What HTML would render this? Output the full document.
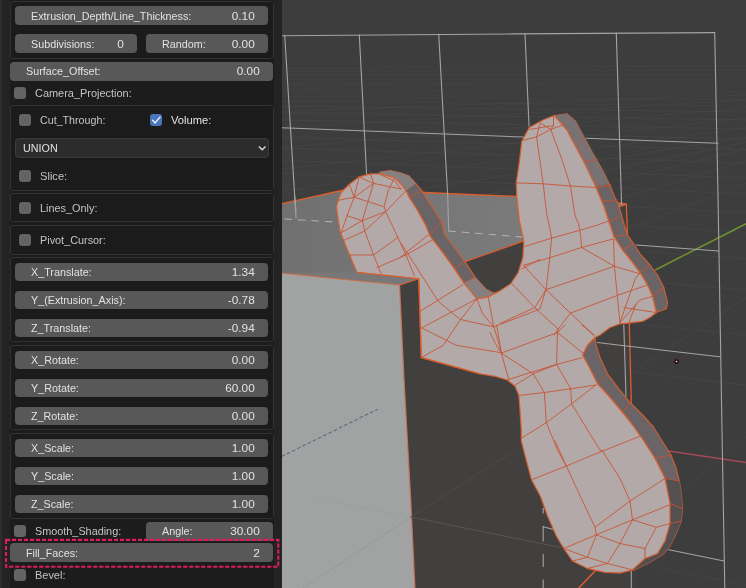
<!DOCTYPE html>
<html><head><meta charset="utf-8"><title>Blender</title>
<style>
html,body{margin:0;padding:0;background:#3d3d3d;}
body{width:746px;height:588px;overflow:hidden;position:relative;font-family:"Liberation Sans",sans-serif;font-size:11.6px;color:#e2e2e2;}
#panel{position:absolute;left:0;top:0;width:282px;height:588px;background:#232323;overflow:hidden;will-change:transform;transform:translateZ(0);}
#lstrip{position:absolute;left:0;top:0;width:2px;height:588px;background:#2d2d2d;}
#col{position:absolute;left:10px;top:0;width:264px;height:588px;background:#1c1c1c;}
.box{position:absolute;left:10px;width:264px;box-sizing:border-box;background:#1b1b1b;border:1px solid #313131;border-radius:3px;}
.f{position:absolute;height:18.8px;background:#585858;border-radius:4px;}
.t{position:absolute;white-space:nowrap;line-height:19px;height:19px;transform-origin:0 50%;transform:scaleX(0.928);}
.v{position:absolute;white-space:nowrap;line-height:19px;height:19px;text-align:right;font-size:11.8px;}
.cb{position:absolute;width:12.2px;height:12.2px;border-radius:3px;background:#636363;}
.dim{color:#c4c4c4;transform:scaleX(0.944);}
#vp{position:absolute;left:282px;top:0;}
</style></head>
<body>
<div id="vp"><svg width="464" height="588" viewBox="282 0 464 588" style="display:block">
<defs><linearGradient id="bg" x1="0" y1="0" x2="0" y2="1"><stop offset="0" stop-color="#3d3d3d"/><stop offset="1" stop-color="#3b3b3b"/></linearGradient><linearGradient id="tf" gradientUnits="userSpaceOnUse" x1="282" y1="200" x2="620" y2="260"><stop offset="0" stop-color="#707070"/><stop offset="0.5" stop-color="#787878"/><stop offset="1" stop-color="#7e7e7e"/></linearGradient></defs>
<rect x="282" y="0" width="464" height="588" fill="#3d3d3d"/>
<polyline points="282.0,211.2 746.0,137.0" fill="none" stroke="#515151" stroke-width="0.9" stroke-linejoin="round" stroke-linecap="round" opacity="0.42"/>
<polyline points="282.0,235.3 746.0,142.5" fill="none" stroke="#515151" stroke-width="0.9" stroke-linejoin="round" stroke-linecap="round" opacity="0.42"/>
<polyline points="282.0,260.4 746.0,149.0" fill="none" stroke="#515151" stroke-width="0.9" stroke-linejoin="round" stroke-linecap="round" opacity="0.42"/>
<polyline points="282.0,300.2 746.0,161.0" fill="none" stroke="#515151" stroke-width="0.9" stroke-linejoin="round" stroke-linecap="round" opacity="0.42"/>
<polyline points="282.0,364.3 746.0,183.3" fill="none" stroke="#515151" stroke-width="0.9" stroke-linejoin="round" stroke-linecap="round" opacity="0.42"/>
<polyline points="282.0,599.2 746.0,297.6" fill="none" stroke="#515151" stroke-width="0.9" stroke-linejoin="round" stroke-linecap="round" opacity="0.42"/>
<polyline points="282.0,831.1 746.0,436.7" fill="none" stroke="#515151" stroke-width="0.9" stroke-linejoin="round" stroke-linecap="round" opacity="0.42"/>
<polyline points="282.0,1233.6 746.0,700.0" fill="none" stroke="#515151" stroke-width="0.9" stroke-linejoin="round" stroke-linecap="round" opacity="0.42"/>
<polyline points="282.0,106.1 746.0,112.0" fill="none" stroke="#515151" stroke-width="0.9" stroke-linejoin="round" stroke-linecap="round" opacity="0.42"/>
<polyline points="282.0,112.6 746.0,120.0" fill="none" stroke="#515151" stroke-width="0.9" stroke-linejoin="round" stroke-linecap="round" opacity="0.42"/>
<polyline points="282.0,120.0 746.0,129.0" fill="none" stroke="#515151" stroke-width="0.9" stroke-linejoin="round" stroke-linecap="round" opacity="0.42"/>
<polyline points="282.0,128.2 746.0,139.0" fill="none" stroke="#515151" stroke-width="0.9" stroke-linejoin="round" stroke-linecap="round" opacity="0.42"/>
<polyline points="282.0,137.2 746.0,150.0" fill="none" stroke="#515151" stroke-width="0.9" stroke-linejoin="round" stroke-linecap="round" opacity="0.42"/>
<polyline points="282.0,147.9 746.0,163.0" fill="none" stroke="#515151" stroke-width="0.9" stroke-linejoin="round" stroke-linecap="round" opacity="0.42"/>
<polyline points="282.0,160.2 746.0,178.0" fill="none" stroke="#515151" stroke-width="0.9" stroke-linejoin="round" stroke-linecap="round" opacity="0.42"/>
<polyline points="282.0,173.3 746.0,194.0" fill="none" stroke="#515151" stroke-width="0.9" stroke-linejoin="round" stroke-linecap="round" opacity="0.42"/>
<polyline points="282.0,188.7 746.0,212.8" fill="none" stroke="#515151" stroke-width="0.9" stroke-linejoin="round" stroke-linecap="round" opacity="0.42"/>
<polyline points="282.0,204.7 746.0,232.3" fill="none" stroke="#515151" stroke-width="0.9" stroke-linejoin="round" stroke-linecap="round" opacity="0.42"/>
<polyline points="282.0,226.3 746.0,258.7" fill="none" stroke="#515151" stroke-width="0.9" stroke-linejoin="round" stroke-linecap="round" opacity="0.42"/>
<polyline points="282.0,252.0 746.0,290.0" fill="none" stroke="#515151" stroke-width="0.9" stroke-linejoin="round" stroke-linecap="round" opacity="0.42"/>
<polyline points="282.0,288.9 746.0,335.0" fill="none" stroke="#515151" stroke-width="0.9" stroke-linejoin="round" stroke-linecap="round" opacity="0.42"/>
<polyline points="282.0,330.1 746.0,385.3" fill="none" stroke="#515151" stroke-width="0.9" stroke-linejoin="round" stroke-linecap="round" opacity="0.42"/>
<polyline points="282.0,493.9 746.0,585.0" fill="none" stroke="#515151" stroke-width="0.9" stroke-linejoin="round" stroke-linecap="round" opacity="0.42"/>
<polyline points="282.0,68.3 746.0,66.0" fill="none" stroke="#4c4c4c" stroke-width="0.9" stroke-linejoin="round" stroke-linecap="round" opacity="0.35"/>
<polyline points="282.0,71.6 746.0,70.0" fill="none" stroke="#4c4c4c" stroke-width="0.9" stroke-linejoin="round" stroke-linecap="round" opacity="0.35"/>
<polyline points="282.0,74.9 746.0,74.0" fill="none" stroke="#4c4c4c" stroke-width="0.9" stroke-linejoin="round" stroke-linecap="round" opacity="0.35"/>
<polyline points="282.0,79.0 746.0,79.0" fill="none" stroke="#4c4c4c" stroke-width="0.9" stroke-linejoin="round" stroke-linecap="round" opacity="0.35"/>
<polyline points="282.0,83.9 746.0,85.0" fill="none" stroke="#4c4c4c" stroke-width="0.9" stroke-linejoin="round" stroke-linecap="round" opacity="0.35"/>
<polyline points="282.0,89.7 746.0,92.0" fill="none" stroke="#4c4c4c" stroke-width="0.9" stroke-linejoin="round" stroke-linecap="round" opacity="0.35"/>
<polyline points="282.0,96.2 746.0,100.0" fill="none" stroke="#4c4c4c" stroke-width="0.9" stroke-linejoin="round" stroke-linecap="round" opacity="0.35"/>
<polyline points="282.0,101.1 746.0,106.0" fill="none" stroke="#4c4c4c" stroke-width="0.9" stroke-linejoin="round" stroke-linecap="round" opacity="0.35"/>
<polyline points="282.0,111.2 746.0,95.0" fill="none" stroke="#4c4c4c" stroke-width="0.9" stroke-linejoin="round" stroke-linecap="round" opacity="0.35"/>
<polyline points="282.0,127.8 746.0,100.0" fill="none" stroke="#4c4c4c" stroke-width="0.9" stroke-linejoin="round" stroke-linecap="round" opacity="0.35"/>
<polyline points="282.0,147.4 746.0,108.0" fill="none" stroke="#4c4c4c" stroke-width="0.9" stroke-linejoin="round" stroke-linecap="round" opacity="0.35"/>
<polyline points="282.0,169.0 746.0,118.0" fill="none" stroke="#4c4c4c" stroke-width="0.9" stroke-linejoin="round" stroke-linecap="round" opacity="0.35"/>
<polyline points="282.0,190.6 746.0,128.0" fill="none" stroke="#4c4c4c" stroke-width="0.9" stroke-linejoin="round" stroke-linecap="round" opacity="0.35"/>
<polyline points="655.7,269.7 746.0,223.8" fill="none" stroke="#6d8f33" stroke-width="1.6" stroke-linejoin="round" stroke-linecap="round" />
<polyline points="668.6,451.0 746.0,462.5" fill="none" stroke="#a3485c" stroke-width="1.4" stroke-linejoin="round" stroke-linecap="round" />
<polygon points="399.5,285.0 626.3,204.5 631.3,402.5 636.0,588.0 414.9,588.0" fill="#423f3f" stroke="none" stroke-width="0" stroke-opacity="0.88" stroke-linejoin="round" />
<polygon points="282.0,203.7 339.5,191.0 345.0,190.0 424.5,192.5 468.0,194.5 515.5,196.3 618.0,203.0 626.3,204.0 399.5,285.0 282.0,273.3" fill="url(#tf)" stroke="none" stroke-width="0" stroke-opacity="0.88" stroke-linejoin="round" />
<polyline points="282.0,203.7 339.5,191.0 345.0,190.0 424.5,192.5 468.0,194.5 515.5,196.3 618.0,203.0 626.3,204.0 627.5,235.0 629.3,323.8 631.3,402.5" fill="none" stroke="#dc5e2c" stroke-width="1.3" stroke-linejoin="round" stroke-linecap="round" />
<polyline points="399.5,285.0 626.3,204.5" fill="none" stroke="#dc5e2c" stroke-width="1.2" stroke-linejoin="round" stroke-linecap="round" />
<polyline points="285.0,219.0 334.0,222.0" fill="none" stroke="#b4b4b4" stroke-width="1" stroke-linejoin="round" stroke-linecap="round" stroke-dasharray="6.6 6.9"/>
<polyline points="448.7,231.0 521.8,237.0" fill="none" stroke="#b4b4b4" stroke-width="1" stroke-linejoin="round" stroke-linecap="round" stroke-dasharray="6.6 6.9"/>
<polyline points="294.7,196.0 296.0,218.0" fill="none" stroke="#a4a4a4" stroke-width="1.1" stroke-linejoin="round" stroke-linecap="round" />
<polyline points="447.7,196.0 448.7,231.0" fill="none" stroke="#a4a4a4" stroke-width="1.1" stroke-linejoin="round" stroke-linecap="round" />
<polyline points="282.0,35.8 514.0,33.9 714.7,32.6" fill="none" stroke="#a4a4a4" stroke-width="1.1" stroke-linejoin="round" stroke-linecap="round" />
<polyline points="284.7,35.3 294.7,196.0 296.0,212.0" fill="none" stroke="#a4a4a4" stroke-width="1.1" stroke-linejoin="round" stroke-linecap="round" />
<polyline points="359.3,34.7 367.7,196.0" fill="none" stroke="#a4a4a4" stroke-width="1.1" stroke-linejoin="round" stroke-linecap="round" />
<polyline points="438.7,34.0 447.7,196.0" fill="none" stroke="#a4a4a4" stroke-width="1.1" stroke-linejoin="round" stroke-linecap="round" />
<polyline points="525.0,33.5 529.0,126.0" fill="none" stroke="#a4a4a4" stroke-width="1.1" stroke-linejoin="round" stroke-linecap="round" />
<polyline points="616.3,33.0 621.3,196.0 621.5,204.0" fill="none" stroke="#a4a4a4" stroke-width="1.1" stroke-linejoin="round" stroke-linecap="round" />
<polyline points="714.7,32.3 718.0,196.0 720.3,330.0 722.0,430.0 724.8,588.0" fill="none" stroke="#a4a4a4" stroke-width="1.1" stroke-linejoin="round" stroke-linecap="round" />
<polyline points="282.0,127.7 514.0,136.7 523.5,137.0" fill="none" stroke="#a4a4a4" stroke-width="1.1" stroke-linejoin="round" stroke-linecap="round" />
<polyline points="586.0,138.3 718.0,143.3" fill="none" stroke="#a4a4a4" stroke-width="1.1" stroke-linejoin="round" stroke-linecap="round" />
<polyline points="636.2,245.0 718.8,251.0" fill="none" stroke="#a4a4a4" stroke-width="1.1" stroke-linejoin="round" stroke-linecap="round" />
<polyline points="597.5,342.5 620.0,345.3 719.5,356.7" fill="none" stroke="#a4a4a4" stroke-width="1.1" stroke-linejoin="round" stroke-linecap="round" />
<polyline points="623.8,325.0 626.0,396.0" fill="none" stroke="#a4a4a4" stroke-width="1.1" stroke-linejoin="round" stroke-linecap="round" />
<polyline points="543.2,526.8 563.8,532.3" fill="none" stroke="#a4a4a4" stroke-width="1.1" stroke-linejoin="round" stroke-linecap="round" />
<polyline points="668.8,549.8 724.0,561.0" fill="none" stroke="#a4a4a4" stroke-width="1.1" stroke-linejoin="round" stroke-linecap="round" />
<polyline points="543.2,508.3 543.2,513.0" fill="none" stroke="#a4a4a4" stroke-width="1.1" stroke-linejoin="round" stroke-linecap="round" />
<polyline points="543.2,526.3 543.2,541.0" fill="none" stroke="#a4a4a4" stroke-width="1.1" stroke-linejoin="round" stroke-linecap="round" />
<polyline points="631.3,571.0 631.3,588.0" fill="none" stroke="#a4a4a4" stroke-width="1.1" stroke-linejoin="round" stroke-linecap="round" />
<polyline points="543.2,554.5 543.2,566.5" fill="none" stroke="#a4a4a4" stroke-width="1.1" stroke-linejoin="round" stroke-linecap="round" />
<polyline points="543.2,580.0 543.2,588.0" fill="none" stroke="#a4a4a4" stroke-width="1.1" stroke-linejoin="round" stroke-linecap="round" />
<polygon points="380.0,173.8 394.6,177.8 401.0,184.2 406.0,190.7 409.0,197.0 417.2,210.0 425.3,224.6 430.0,236.0 442.2,251.9 454.4,268.8 463.8,282.8 476.9,298.8 488.2,297.0 497.6,292.2 497.6,292.2 493.8,293.2 486.3,289.4 475.0,277.2 464.7,261.3 456.3,250.0 445.0,235.0 441.5,221.4 433.4,208.5 427.0,198.8 422.0,190.7 415.6,183.4 409.0,176.0 401.0,173.0 390.6,170.5 380.0,172.0" fill="#6b6466" stroke="#dc5e2c" stroke-width="1.2" stroke-opacity="0.88" stroke-linejoin="round" />
<polygon points="554.3,115.5 566.8,130.0 575.5,146.3 585.5,165.0 595.5,186.3 604.3,207.5 607.5,217.5 613.8,236.3 622.5,250.0 632.5,262.5 640.0,272.5 647.5,285.0 652.5,296.3 656.3,312.5 656.3,312.5 666.3,308.8 667.5,302.5 663.8,287.5 657.5,275.0 650.0,265.0 640.0,253.8 633.8,243.8 627.5,235.0 624.3,225.0 618.0,203.0 614.3,196.3 609.3,183.8 601.8,168.8 593.0,153.8 584.3,137.5 575.5,121.3 566.8,113.8 554.3,115.5" fill="#6b6466" stroke="#dc5e2c" stroke-width="1.2" stroke-opacity="0.88" stroke-linejoin="round" />
<polygon points="595.0,337.5 587.5,345.0 582.5,355.0 590.0,368.8 597.5,383.8 610.0,397.5 622.5,412.5 632.5,425.0 643.8,441.0 655.0,458.5 665.0,478.5 670.0,503.5 670.0,523.5 665.0,541.0 657.5,553.5 645.0,558.5 632.5,569.8 632.5,569.8 635.0,569.8 650.0,562.3 662.5,554.8 670.0,546.0 676.3,533.5 681.3,521.0 682.5,508.5 681.3,493.5 679.3,481.0 676.0,468.0 671.0,455.0 661.5,440.0 653.5,427.0 643.0,415.5 630.0,402.5 618.8,388.8 607.5,373.8 600.0,357.5 596.0,345.0 595.0,337.5" fill="#6b6466" stroke="#dc5e2c" stroke-width="1.2" stroke-opacity="0.88" stroke-linejoin="round" />
<polygon points="463.8,282.8 476.9,298.8 488.2,297.0 497.6,292.2 493.8,293.2 486.3,289.4 475.0,277.2" fill="#857f80" stroke="none" stroke-width="0" stroke-opacity="0.88" stroke-linejoin="round" />
<polygon points="380.0,173.8 394.6,177.8 401.0,184.2 406.0,190.7 415.6,183.4 409.0,176.0 401.0,173.0 390.6,170.5 380.0,172.0" fill="#878081" stroke="none" stroke-width="0" stroke-opacity="0.88" stroke-linejoin="round" />
<polygon points="665.0,478.5 670.0,503.5 670.0,523.5 665.0,541.0 657.5,553.5 645.0,558.5 632.5,569.8 635.0,569.8 650.0,562.3 662.5,554.8 670.0,546.0 676.3,533.5 681.3,521.0 682.5,508.5 681.3,493.5 679.3,481.0" fill="#544f51" stroke="none" stroke-width="0" stroke-opacity="0.88" stroke-linejoin="round" />
<polygon points="554.3,115.5 566.8,130.0 575.5,146.3 585.5,165.0 595.5,186.3 609.3,183.8 601.8,168.8 593.0,153.8 584.3,137.5 575.5,121.3 566.8,113.8" fill="#797172" stroke="none" stroke-width="0" stroke-opacity="0.88" stroke-linejoin="round" />
<polygon points="357.0,272.5 347.5,250.0 340.0,231.3 337.5,215.0 336.5,206.8 338.0,200.4 341.3,192.3 349.4,184.2 359.0,177.0 370.4,173.9 380.0,173.8 394.6,177.8 401.0,184.2 406.0,190.7 409.0,197.0 417.2,210.0 425.3,224.6 430.0,236.0 442.2,251.9 454.4,268.8 463.8,282.8 476.9,298.8 488.2,297.0 497.6,292.2 510.7,283.8 518.2,272.5 522.9,257.5 523.8,241.6 519.3,220.0 516.8,196.3 516.3,182.5 519.3,162.5 521.8,141.3 529.3,127.5 543.0,120.0 554.3,115.5 566.8,130.0 575.5,146.3 585.5,165.0 595.5,186.3 604.3,207.5 607.5,217.5 613.8,236.3 622.5,250.0 632.5,262.5 640.0,272.5 647.5,285.0 652.5,296.3 656.3,312.5 650.0,317.5 642.5,321.3 628.8,323.0 620.0,323.8 610.0,327.5 600.0,335.0 595.0,337.5 587.5,345.0 582.5,355.0 590.0,368.8 597.5,383.8 610.0,397.5 622.5,412.5 632.5,425.0 643.8,441.0 655.0,458.5 665.0,478.5 670.0,503.5 670.0,523.5 665.0,541.0 657.5,553.5 645.0,558.5 632.5,569.8 620.0,573.0 605.0,572.3 587.5,568.5 572.5,561.0 563.8,548.5 556.3,536.0 547.5,516.0 540.3,496.0 531.5,479.8 526.5,461.0 521.3,441.0 521.3,430.0 520.0,410.0 518.8,395.0 515.0,386.3 507.5,380.0 495.0,376.3 480.0,373.8 421.3,357.5 418.8,278.8" fill="#b3a9a9" stroke="#dc5e2c" stroke-width="1.3" stroke-opacity="0.88" stroke-linejoin="round" />
<polyline points="359.0,177.0 354.2,197.2 347.0,215.7 341.3,232.7" fill="none" stroke="#c8512f" stroke-width="1.0" stroke-linejoin="round" stroke-linecap="round" opacity="0.85"/>
<polyline points="370.4,173.7 373.6,183.4 362.3,220.6 364.7,231.0 373.6,255.0 381.0,273.5" fill="none" stroke="#c8512f" stroke-width="1.0" stroke-linejoin="round" stroke-linecap="round" opacity="0.85"/>
<polyline points="359.0,177.0 373.6,183.4 401.0,189.0" fill="none" stroke="#c8512f" stroke-width="1.0" stroke-linejoin="round" stroke-linecap="round" opacity="0.85"/>
<polyline points="380.0,174.5 394.6,181.0 401.0,189.0" fill="none" stroke="#c8512f" stroke-width="1.0" stroke-linejoin="round" stroke-linecap="round" opacity="0.85"/>
<polyline points="394.6,177.8 388.2,190.7 384.1,206.8 385.7,211.7 397.9,237.5 405.9,255.0 414.5,276.0" fill="none" stroke="#c8512f" stroke-width="1.0" stroke-linejoin="round" stroke-linecap="round" opacity="0.85"/>
<polyline points="354.2,197.2 384.1,206.8" fill="none" stroke="#c8512f" stroke-width="1.0" stroke-linejoin="round" stroke-linecap="round" opacity="0.85"/>
<polyline points="349.4,184.2 354.2,197.2" fill="none" stroke="#c8512f" stroke-width="1.0" stroke-linejoin="round" stroke-linecap="round" opacity="0.85"/>
<polyline points="373.6,183.4 354.2,197.2" fill="none" stroke="#c8512f" stroke-width="1.0" stroke-linejoin="round" stroke-linecap="round" opacity="0.85"/>
<polyline points="338.0,200.4 354.2,197.2" fill="none" stroke="#c8512f" stroke-width="1.0" stroke-linejoin="round" stroke-linecap="round" opacity="0.85"/>
<polyline points="347.0,215.7 362.3,220.6 385.7,211.7 406.0,190.7" fill="none" stroke="#c8512f" stroke-width="1.0" stroke-linejoin="round" stroke-linecap="round" opacity="0.85"/>
<polyline points="341.3,232.7 362.3,220.6" fill="none" stroke="#c8512f" stroke-width="1.0" stroke-linejoin="round" stroke-linecap="round" opacity="0.85"/>
<polyline points="343.0,240.8 364.7,231.0 385.7,211.7" fill="none" stroke="#c8512f" stroke-width="1.0" stroke-linejoin="round" stroke-linecap="round" opacity="0.85"/>
<polyline points="349.5,255.0 373.6,255.0 397.9,237.5" fill="none" stroke="#c8512f" stroke-width="1.0" stroke-linejoin="round" stroke-linecap="round" opacity="0.85"/>
<polyline points="377.0,267.5 405.9,255.0 425.3,244.0 433.4,239.2" fill="none" stroke="#c8512f" stroke-width="1.0" stroke-linejoin="round" stroke-linecap="round" opacity="0.85"/>
<polyline points="516.9,182.9 543.2,183.8 570.4,186.0 597.6,187.6 610.7,184.7" fill="none" stroke="#c8512f" stroke-width="1.0" stroke-linejoin="round" stroke-linecap="round" opacity="0.85"/>
<polyline points="536.6,136.9 543.2,183.8 546.9,215.3 549.2,225.0 551.6,238.1" fill="none" stroke="#c8512f" stroke-width="1.0" stroke-linejoin="round" stroke-linecap="round" opacity="0.85"/>
<polyline points="550.7,129.4 561.9,159.4 570.4,186.0 575.0,215.3 578.8,225.0 580.7,236.3 581.6,247.5" fill="none" stroke="#c8512f" stroke-width="1.0" stroke-linejoin="round" stroke-linecap="round" opacity="0.85"/>
<polyline points="522.5,140.6 536.6,136.9 550.7,129.4 563.8,124.7" fill="none" stroke="#c8512f" stroke-width="1.0" stroke-linejoin="round" stroke-linecap="round" opacity="0.85"/>
<polyline points="540.3,122.8 550.7,129.4" fill="none" stroke="#c8512f" stroke-width="1.0" stroke-linejoin="round" stroke-linecap="round" opacity="0.85"/>
<polyline points="553.5,116.3 553.5,125.6 550.7,129.4" fill="none" stroke="#c8512f" stroke-width="1.0" stroke-linejoin="round" stroke-linecap="round" opacity="0.85"/>
<polyline points="530.0,129.4 553.5,125.6" fill="none" stroke="#c8512f" stroke-width="1.0" stroke-linejoin="round" stroke-linecap="round" opacity="0.85"/>
<polyline points="540.3,122.8 536.6,136.9" fill="none" stroke="#c8512f" stroke-width="1.0" stroke-linejoin="round" stroke-linecap="round" opacity="0.85"/>
<polyline points="575.5,146.3 584.3,137.5" fill="none" stroke="#c8512f" stroke-width="1.0" stroke-linejoin="round" stroke-linecap="round" opacity="0.85"/>
<polyline points="603.2,200.7 616.3,200.7" fill="none" stroke="#c8512f" stroke-width="1.0" stroke-linejoin="round" stroke-linecap="round" opacity="0.85"/>
<polyline points="524.4,246.6 551.6,238.1 578.8,230.6 597.6,225.0 618.0,217.5" fill="none" stroke="#c8512f" stroke-width="1.0" stroke-linejoin="round" stroke-linecap="round" opacity="0.85"/>
<polyline points="523.5,265.3 549.7,257.8 581.6,247.5 612.6,239.1" fill="none" stroke="#c8512f" stroke-width="1.0" stroke-linejoin="round" stroke-linecap="round" opacity="0.85"/>
<polyline points="551.6,238.1 549.7,257.8 546.0,289.7 534.7,307.6 500.0,323.5" fill="none" stroke="#c8512f" stroke-width="1.0" stroke-linejoin="round" stroke-linecap="round" opacity="0.85"/>
<polyline points="581.6,247.5 614.4,266.3" fill="none" stroke="#c8512f" stroke-width="1.0" stroke-linejoin="round" stroke-linecap="round" opacity="0.85"/>
<polyline points="546.0,289.7 614.4,266.3" fill="none" stroke="#c8512f" stroke-width="1.0" stroke-linejoin="round" stroke-linecap="round" opacity="0.85"/>
<polyline points="546.0,289.7 570.4,313.2 593.8,335.0" fill="none" stroke="#c8512f" stroke-width="1.0" stroke-linejoin="round" stroke-linecap="round" opacity="0.85"/>
<polyline points="570.4,313.2 617.3,295.4 647.5,285.0" fill="none" stroke="#c8512f" stroke-width="1.0" stroke-linejoin="round" stroke-linecap="round" opacity="0.85"/>
<polyline points="570.4,313.2 558.2,329.1 554.4,335.0" fill="none" stroke="#c8512f" stroke-width="1.0" stroke-linejoin="round" stroke-linecap="round" opacity="0.85"/>
<polyline points="523.5,265.3 546.0,289.7" fill="none" stroke="#c8512f" stroke-width="1.0" stroke-linejoin="round" stroke-linecap="round" opacity="0.85"/>
<polyline points="512.2,284.1 534.7,307.6 558.2,329.1 557.5,332.5" fill="none" stroke="#c8512f" stroke-width="1.0" stroke-linejoin="round" stroke-linecap="round" opacity="0.85"/>
<polyline points="614.4,266.3 613.5,239.1" fill="none" stroke="#c8512f" stroke-width="1.0" stroke-linejoin="round" stroke-linecap="round" opacity="0.85"/>
<polyline points="614.4,266.3 617.3,295.4 620.0,322.6" fill="none" stroke="#c8512f" stroke-width="1.0" stroke-linejoin="round" stroke-linecap="round" opacity="0.85"/>
<polyline points="614.4,266.3 640.0,273.8" fill="none" stroke="#c8512f" stroke-width="1.0" stroke-linejoin="round" stroke-linecap="round" opacity="0.85"/>
<polyline points="620.0,322.6 635.0,279.4 640.0,272.5" fill="none" stroke="#c8512f" stroke-width="1.0" stroke-linejoin="round" stroke-linecap="round" opacity="0.85"/>
<polyline points="620.0,322.6 640.0,300.0 652.5,296.3" fill="none" stroke="#c8512f" stroke-width="1.0" stroke-linejoin="round" stroke-linecap="round" opacity="0.85"/>
<polyline points="623.8,307.6 656.3,312.5" fill="none" stroke="#c8512f" stroke-width="1.0" stroke-linejoin="round" stroke-linecap="round" opacity="0.85"/>
<polyline points="628.8,323.0 636.0,304.0" fill="none" stroke="#c8512f" stroke-width="1.0" stroke-linejoin="round" stroke-linecap="round" opacity="0.85"/>
<polyline points="400.0,241.6 438.5,301.6 460.0,319.4 493.8,326.9 539.8,309.1 546.0,289.7" fill="none" stroke="#c8512f" stroke-width="1.0" stroke-linejoin="round" stroke-linecap="round" opacity="0.85"/>
<polyline points="400.0,257.5 428.1,235.0" fill="none" stroke="#c8512f" stroke-width="1.0" stroke-linejoin="round" stroke-linecap="round" opacity="0.85"/>
<polyline points="420.6,311.0 462.9,284.7" fill="none" stroke="#c8512f" stroke-width="1.0" stroke-linejoin="round" stroke-linecap="round" opacity="0.85"/>
<polyline points="421.6,327.9 476.9,298.8" fill="none" stroke="#c8512f" stroke-width="1.0" stroke-linejoin="round" stroke-linecap="round" opacity="0.85"/>
<polyline points="421.6,327.9 456.3,345.3 500.0,352.5" fill="none" stroke="#c8512f" stroke-width="1.0" stroke-linejoin="round" stroke-linecap="round" opacity="0.85"/>
<polyline points="476.9,298.8 460.0,320.4 443.2,345.3 421.3,357.5" fill="none" stroke="#c8512f" stroke-width="1.0" stroke-linejoin="round" stroke-linecap="round" opacity="0.85"/>
<polyline points="476.9,298.8 482.6,313.8 493.8,326.9 499.4,345.3 501.3,353.1" fill="none" stroke="#c8512f" stroke-width="1.0" stroke-linejoin="round" stroke-linecap="round" opacity="0.85"/>
<polyline points="488.2,297.0 493.8,326.9" fill="none" stroke="#c8512f" stroke-width="1.0" stroke-linejoin="round" stroke-linecap="round" opacity="0.85"/>
<polyline points="522.0,268.8 539.8,259.4" fill="none" stroke="#c8512f" stroke-width="1.0" stroke-linejoin="round" stroke-linecap="round" opacity="0.85"/>
<polyline points="490.0,332.5 495.6,343.8 501.3,353.1 508.8,379.4" fill="none" stroke="#c8512f" stroke-width="1.0" stroke-linejoin="round" stroke-linecap="round" opacity="0.85"/>
<polyline points="496.6,325.0 501.3,353.1" fill="none" stroke="#c8512f" stroke-width="1.0" stroke-linejoin="round" stroke-linecap="round" opacity="0.85"/>
<polyline points="501.3,353.1 557.5,332.5 565.0,325.0" fill="none" stroke="#c8512f" stroke-width="1.0" stroke-linejoin="round" stroke-linecap="round" opacity="0.85"/>
<polyline points="557.5,332.5 556.6,364.4 533.2,373.8 515.3,385.0" fill="none" stroke="#c8512f" stroke-width="1.0" stroke-linejoin="round" stroke-linecap="round" opacity="0.85"/>
<polyline points="501.3,353.1 533.2,373.8 544.4,392.5 546.3,422.6 522.5,437.5" fill="none" stroke="#c8512f" stroke-width="1.0" stroke-linejoin="round" stroke-linecap="round" opacity="0.85"/>
<polyline points="508.8,379.4 556.6,364.4 581.9,357.8" fill="none" stroke="#c8512f" stroke-width="1.0" stroke-linejoin="round" stroke-linecap="round" opacity="0.85"/>
<polyline points="519.1,395.4 544.4,392.5 570.7,388.8 596.0,385.0" fill="none" stroke="#c8512f" stroke-width="1.0" stroke-linejoin="round" stroke-linecap="round" opacity="0.85"/>
<polyline points="556.6,364.4 570.7,388.8 571.6,403.8 587.6,430.0 600.0,450.0 602.5,451.0" fill="none" stroke="#c8512f" stroke-width="1.0" stroke-linejoin="round" stroke-linecap="round" opacity="0.85"/>
<polyline points="546.3,422.6 571.6,403.8 596.0,385.0" fill="none" stroke="#c8512f" stroke-width="1.0" stroke-linejoin="round" stroke-linecap="round" opacity="0.85"/>
<polyline points="546.3,422.6 557.5,450.0 566.3,466.0" fill="none" stroke="#c8512f" stroke-width="1.0" stroke-linejoin="round" stroke-linecap="round" opacity="0.85"/>
<polyline points="557.5,332.5 582.9,353.1" fill="none" stroke="#c8512f" stroke-width="1.0" stroke-linejoin="round" stroke-linecap="round" opacity="0.85"/>
<polyline points="581.9,325.0 595.0,336.3" fill="none" stroke="#c8512f" stroke-width="1.0" stroke-linejoin="round" stroke-linecap="round" opacity="0.85"/>
<polyline points="531.5,479.8 566.3,466.0 602.5,451.0 640.0,436.3" fill="none" stroke="#c8512f" stroke-width="1.0" stroke-linejoin="round" stroke-linecap="round" opacity="0.85"/>
<polyline points="555.0,441.0 566.3,466.0 582.5,501.0 595.0,527.3 596.3,534.8" fill="none" stroke="#c8512f" stroke-width="1.0" stroke-linejoin="round" stroke-linecap="round" opacity="0.85"/>
<polyline points="602.5,451.0 620.0,478.5 630.0,501.0 632.5,519.8" fill="none" stroke="#c8512f" stroke-width="1.0" stroke-linejoin="round" stroke-linecap="round" opacity="0.85"/>
<polyline points="595.0,527.3 630.0,501.0 665.0,478.5" fill="none" stroke="#c8512f" stroke-width="1.0" stroke-linejoin="round" stroke-linecap="round" opacity="0.85"/>
<polyline points="563.8,548.5 596.3,534.8 632.5,519.8 670.0,504.8" fill="none" stroke="#c8512f" stroke-width="1.0" stroke-linejoin="round" stroke-linecap="round" opacity="0.85"/>
<polyline points="632.5,519.8 656.3,527.3 670.0,523.5" fill="none" stroke="#c8512f" stroke-width="1.0" stroke-linejoin="round" stroke-linecap="round" opacity="0.85"/>
<polyline points="596.3,534.8 620.0,543.5 645.0,548.5 656.3,527.3" fill="none" stroke="#c8512f" stroke-width="1.0" stroke-linejoin="round" stroke-linecap="round" opacity="0.85"/>
<polyline points="632.5,519.8 620.0,543.5 607.5,563.5" fill="none" stroke="#c8512f" stroke-width="1.0" stroke-linejoin="round" stroke-linecap="round" opacity="0.85"/>
<polyline points="563.8,548.5 587.5,557.3 607.5,563.5 632.5,569.8" fill="none" stroke="#c8512f" stroke-width="1.0" stroke-linejoin="round" stroke-linecap="round" opacity="0.85"/>
<polyline points="596.3,534.8 587.5,557.3" fill="none" stroke="#c8512f" stroke-width="1.0" stroke-linejoin="round" stroke-linecap="round" opacity="0.85"/>
<polyline points="645.0,548.5 645.0,558.5" fill="none" stroke="#c8512f" stroke-width="1.0" stroke-linejoin="round" stroke-linecap="round" opacity="0.85"/>
<polyline points="572.5,561.0 587.5,557.3" fill="none" stroke="#c8512f" stroke-width="1.0" stroke-linejoin="round" stroke-linecap="round" opacity="0.85"/>
<polyline points="587.5,568.5 607.5,563.5" fill="none" stroke="#c8512f" stroke-width="1.0" stroke-linejoin="round" stroke-linecap="round" opacity="0.85"/>
<polyline points="622.5,412.5 630.0,402.5" fill="none" stroke="#c8512f" stroke-width="1.0" stroke-linejoin="round" stroke-linecap="round" opacity="0.85"/>
<polyline points="655.0,458.5 671.0,455.0" fill="none" stroke="#c8512f" stroke-width="1.0" stroke-linejoin="round" stroke-linecap="round" opacity="0.85"/>
<polyline points="665.0,478.5 679.3,481.0" fill="none" stroke="#c8512f" stroke-width="1.0" stroke-linejoin="round" stroke-linecap="round" opacity="0.85"/>
<polyline points="670.0,503.5 682.5,508.5" fill="none" stroke="#c8512f" stroke-width="1.0" stroke-linejoin="round" stroke-linecap="round" opacity="0.85"/>
<polyline points="670.0,523.5 681.3,521.0" fill="none" stroke="#c8512f" stroke-width="1.0" stroke-linejoin="round" stroke-linecap="round" opacity="0.85"/>
<polyline points="597.5,383.8 607.5,373.8" fill="none" stroke="#c8512f" stroke-width="1.0" stroke-linejoin="round" stroke-linecap="round" opacity="0.85"/>
<polyline points="640.0,272.5 650.0,265.0" fill="none" stroke="#c8512f" stroke-width="1.0" stroke-linejoin="round" stroke-linecap="round" opacity="0.85"/>
<polyline points="652.5,296.3 663.8,287.5" fill="none" stroke="#c8512f" stroke-width="1.0" stroke-linejoin="round" stroke-linecap="round" opacity="0.85"/>
<polyline points="622.5,250.0 633.8,243.8" fill="none" stroke="#c8512f" stroke-width="1.0" stroke-linejoin="round" stroke-linecap="round" opacity="0.85"/>
<polyline points="613.8,236.3 627.5,235.0" fill="none" stroke="#c8512f" stroke-width="1.0" stroke-linejoin="round" stroke-linecap="round" opacity="0.85"/>
<polyline points="409.0,197.0 422.0,190.7" fill="none" stroke="#c8512f" stroke-width="1.0" stroke-linejoin="round" stroke-linecap="round" opacity="0.85"/>
<polyline points="430.0,236.0 441.5,221.4" fill="none" stroke="#c8512f" stroke-width="1.0" stroke-linejoin="round" stroke-linecap="round" opacity="0.85"/>
<polyline points="454.4,268.8 464.7,261.3" fill="none" stroke="#c8512f" stroke-width="1.0" stroke-linejoin="round" stroke-linecap="round" opacity="0.85"/>
<polyline points="463.8,282.8 475.0,277.2" fill="none" stroke="#c8512f" stroke-width="1.0" stroke-linejoin="round" stroke-linecap="round" opacity="0.85"/>
<polyline points="597.6,187.6 610.7,184.7" fill="none" stroke="#c8512f" stroke-width="1.0" stroke-linejoin="round" stroke-linecap="round" opacity="0.85"/>
<polyline points="584.4,162.2 597.6,159.4" fill="none" stroke="#c8512f" stroke-width="1.0" stroke-linejoin="round" stroke-linecap="round" opacity="0.85"/>
<polygon points="282.0,273.3 354.2,272.0 418.2,279.0 399.5,285.0" fill="#787878" stroke="none" stroke-width="0" stroke-opacity="0.88" stroke-linejoin="round" />
<polyline points="357.0,272.5 418.8,278.8 421.3,357.5 480.0,373.8" fill="none" stroke="#dc5e2c" stroke-width="1.1" stroke-linejoin="round" stroke-linecap="round" />
<polyline points="399.5,285.0 418.8,278.8" fill="none" stroke="#dc5e2c" stroke-width="1.0" stroke-linejoin="round" stroke-linecap="round" />
<polygon points="282.0,273.3 399.5,285.0 404.0,380.0 410.7,500.0 414.9,588.0 282.0,588.0" fill="#a1a3a3" stroke="none" stroke-width="0" stroke-opacity="0.88" stroke-linejoin="round" />
<polyline points="282.0,273.3 399.5,285.0" fill="none" stroke="#dd6e40" stroke-width="1.0" stroke-linejoin="round" stroke-linecap="round" opacity="0.85"/>
<polyline points="399.5,285.0 404.0,380.0 410.7,500.0 414.9,588.0" fill="none" stroke="#c9765a" stroke-width="1.3" stroke-linejoin="round" stroke-linecap="round" opacity="0.9"/>
<polyline points="303.0,588.0 411.0,517.0" fill="none" stroke="#979999" stroke-width="1" stroke-linejoin="round" stroke-linecap="round" />
<polyline points="314.0,498.5 411.0,517.0" fill="none" stroke="#9c9e9e" stroke-width="0.8" stroke-linejoin="round" stroke-linecap="round" />
<polyline points="411.0,517.0 514.0,451.0" fill="none" stroke="#4c4a4a" stroke-width="1" stroke-linejoin="round" stroke-linecap="round" />
<polyline points="411.0,517.0 563.0,548.0" fill="none" stroke="#565454" stroke-width="1" stroke-linejoin="round" stroke-linecap="round" />
<polyline points="282.0,456.3 377.2,409.4" fill="none" stroke="#566a86" stroke-width="1.1" stroke-linejoin="round" stroke-linecap="round" stroke-dasharray="2.8 3" stroke-linecap="butt"/>
<polyline points="595.0,571.0 578.8,588.0" fill="none" stroke="#dc5e2c" stroke-width="1.5" stroke-linejoin="round" stroke-linecap="round" />
<circle cx="676.5" cy="361.5" r="2.6" fill="#1c1014" stroke="#5a2030" stroke-width="0.8"/><circle cx="676.5" cy="361.5" r="0.8" fill="#fff"/>
</svg></div>
<div id="panel"><div id="lstrip"></div><div id="col"></div>
<div class="box" style="top:0.8px;height:58.2px"></div>
<div class="f" style="left:15.2px;top:6.3px;width:253.3px"></div>
<div class="t" style="left:31.3px;top:5.5px">Extrusion_Depth/Line_Thickness:</div>
<div class="v" style="right:27.30000000000001px;top:6.5px">0.10</div>
<div class="f" style="left:15.2px;top:34.3px;width:122.3px"></div>
<div class="t" style="left:31.3px;top:33.5px">Subdivisions:</div>
<div class="v" style="right:158.3px;top:34.5px">0</div>
<div class="f" style="left:146.2px;top:34.3px;width:122.3px"></div>
<div class="t" style="left:162.2px;top:33.5px">Random:</div>
<div class="v" style="right:27.30000000000001px;top:34.5px">0.00</div>
<div class="f" style="left:10.2px;top:61.8px;width:263.3px"></div>
<div class="t" style="left:26.3px;top:61.0px">Surface_Offset:</div>
<div class="v" style="right:22.30000000000001px;top:62.0px">0.00</div>
<div class="cb" style="left:14px;top:87px"></div>
<div class="t dim" style="left:34.9px;top:83px">Camera_Projection:</div>
<div class="box" style="top:105.1px;height:86.0px"></div>
<div class="cb" style="left:18.8px;top:113.6px"></div>
<div class="t dim" style="left:39.900000000000006px;top:110px;transform:scaleX(0.922)">Cut_Through:</div>
<div class="cb" style="left:149.8px;top:113.6px;background:#4a76bc"><svg width="12.5" height="12.5" viewBox="0 0 12.5 12.5" style="position:absolute;left:0;top:0"><path d="M2.7 6.2 L5.2 8.9 L10 3.1" fill="none" stroke="#eef2fb" stroke-width="1.45" stroke-linecap="round" stroke-linejoin="round"/></svg></div>
<div class="t" style="left:170.9px;top:110px;transform:scaleX(0.965)">Volume:</div>
<div class="f" style="left:15px;top:138px;width:254px;height:20px;background:#2c2c2c;box-sizing:border-box;border:1px solid #3b3b3b"></div>
<div class="t" style="left:23.4px;top:138px">UNION</div>
<svg style="position:absolute;left:256px;top:143px" width="14" height="12" viewBox="256 143 14 12"><path d="M259.4 146.9 L262.2 149.8 L265 146.9" fill="none" stroke="#d4d4d4" stroke-width="1.5" stroke-linecap="round" stroke-linejoin="round"/></svg>
<div class="cb" style="left:18.8px;top:169.8px"></div>
<div class="t dim" style="left:39.900000000000006px;top:166px;transform:scaleX(0.96)">Slice:</div>
<div class="box" style="top:192.8px;height:29.099999999999994px"></div>
<div class="cb" style="left:18.8px;top:201.8px"></div>
<div class="t dim" style="left:39.900000000000006px;top:198px;transform:scaleX(0.938)">Lines_Only:</div>
<div class="box" style="top:224.9px;height:30.0px"></div>
<div class="cb" style="left:18.8px;top:233.8px"></div>
<div class="t dim" style="left:39.900000000000006px;top:230px;transform:scaleX(0.936)">Pivot_Cursor:</div>
<div class="box" style="top:257.1px;height:85.39999999999998px"></div>
<div class="f" style="left:15.2px;top:262.6px;width:253.3px"></div>
<div class="t" style="left:31.3px;top:261.5px">X_Translate:</div>
<div class="v" style="right:27.30000000000001px;top:262.5px">1.34</div>
<div class="f" style="left:15.2px;top:290.6px;width:253.3px"></div>
<div class="t" style="left:31.3px;top:289.5px">Y_(Extrusion_Axis):</div>
<div class="v" style="right:27.30000000000001px;top:290.5px">-0.78</div>
<div class="f" style="left:15.2px;top:318.6px;width:253.3px"></div>
<div class="t" style="left:31.3px;top:317.5px">Z_Translate:</div>
<div class="v" style="right:27.30000000000001px;top:318.5px">-0.94</div>
<div class="box" style="top:345.1px;height:85.39999999999998px"></div>
<div class="f" style="left:15.2px;top:350.7px;width:253.3px"></div>
<div class="t" style="left:31.3px;top:349.5px">X_Rotate:</div>
<div class="v" style="right:27.30000000000001px;top:350.5px">0.00</div>
<div class="f" style="left:15.2px;top:378.7px;width:253.3px"></div>
<div class="t" style="left:31.3px;top:377.5px">Y_Rotate:</div>
<div class="v" style="right:27.30000000000001px;top:378.5px">60.00</div>
<div class="f" style="left:15.2px;top:406.7px;width:253.3px"></div>
<div class="t" style="left:31.3px;top:405.5px">Z_Rotate:</div>
<div class="v" style="right:27.30000000000001px;top:406.5px">0.00</div>
<div class="box" style="top:433.3px;height:85.59999999999997px"></div>
<div class="f" style="left:15.2px;top:438.6px;width:253.3px"></div>
<div class="t" style="left:31.3px;top:437.5px">X_Scale:</div>
<div class="v" style="right:27.30000000000001px;top:438.5px">1.00</div>
<div class="f" style="left:15.2px;top:466.6px;width:253.3px"></div>
<div class="t" style="left:31.3px;top:465.5px">Y_Scale:</div>
<div class="v" style="right:27.30000000000001px;top:466.5px">1.00</div>
<div class="f" style="left:15.2px;top:494.6px;width:253.3px"></div>
<div class="t" style="left:31.3px;top:493.5px">Z_Scale:</div>
<div class="v" style="right:27.30000000000001px;top:494.5px">1.00</div>
<div class="cb" style="left:14px;top:525px"></div>
<div class="t dim" style="left:34.9px;top:521px;transform:scaleX(0.935)">Smooth_Shading:</div>
<div class="f" style="left:146.2px;top:521.8px;width:127.3px"></div>
<div class="t" style="left:162.2px;top:521.0px">Angle:</div>
<div class="v" style="right:22.30000000000001px;top:522.0px">30.00</div>
<div class="f" style="left:10.2px;top:543.3px;width:263.3px"></div>
<div class="t" style="left:26.3px;top:542.5px">Fill_Faces:</div>
<div class="v" style="right:22.30000000000001px;top:543.5px">2</div>
<div class="cb" style="left:14px;top:569px"></div>
<div class="t dim" style="left:34.9px;top:565px">Bevel:</div>
<svg style="position:absolute;left:0;top:530px" width="282" height="50" viewBox="0 530 282 50"><rect x="6" y="539.9" width="272.3" height="26.8" fill="none" stroke="#dc1b60" stroke-width="2.15" stroke-dasharray="4.2 1.8"/></svg>
</div>
</body></html>
